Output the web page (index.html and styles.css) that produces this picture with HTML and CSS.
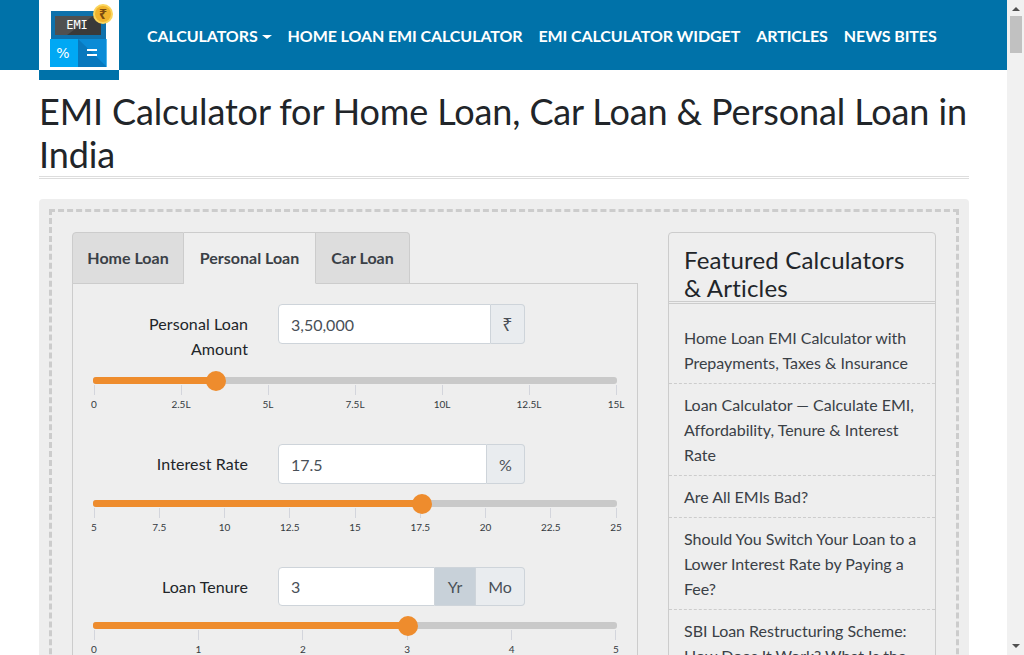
FILE: index.html
```html
<!DOCTYPE html>
<html lang="en">
  <head>
    <meta charset="UTF-8" />
    <meta name="viewport" content="width=device-width, initial-scale=1.0" />
    <title>EMI Calculator</title>
    <link rel="stylesheet" href="styles.css">
  </head>
  <body>
    <div class="page">
      <nav class="navbar">
        <a class="brand" href="#">
          <svg width="70" height="68" viewBox="0 0 70 68">
            <rect x="2" y="11" width="55" height="29" fill="#0f71ab" />
            <rect x="6" y="16" width="46" height="19" fill="#3a3a3a" />
            <polygon points="6,16 44,16 18,35 6,35" fill="#505050" />
            <text x="28" y="29" class="logo-emi" text-anchor="middle">EMI</text>
            <rect x="1" y="39" width="28" height="28" fill="#00a8f4" />
            <rect x="29" y="39" width="29" height="28" fill="#0a8bd6" />
            <polygon points="29,39 58,67 29,67" fill="#0878bd" />
            <rect x="57" y="39" width="1" height="28" fill="#4db6ee" />
            <text x="14" y="58" class="logo-sign" text-anchor="middle">%</text>
            <rect x="38" y="49" width="10" height="2" fill="#fff" />
            <rect x="38" y="54" width="10" height="2" fill="#fff" />
            <circle cx="54" cy="14" r="10" fill="#fbd55c" />
            <circle cx="54" cy="14" r="8" fill="#f0b32c" />
            <text x="54" y="19" class="logo-coin" text-anchor="middle">₹</text>
          </svg>
        </a>
        <ul class="nav-links">
          <li><a href="#">Calculators<span class="caret"></span></a></li>
          <li><a href="#">Home Loan EMI Calculator</a></li>
          <li><a href="#">EMI Calculator Widget</a></li>
          <li><a href="#">Articles</a></li>
          <li><a href="#">News Bites</a></li>
        </ul>
      </nav>

      <main class="main">
        <h1 class="page-title">EMI Calculator for Home Loan, Car Loan &amp; Personal Loan in India</h1>

        <div class="panel">
          <div class="dashed">
            <section class="calculator">
              <ul class="tabs">
                <li>Home Loan</li>
                <li class="active">Personal Loan</li>
                <li>Car Loan</li>
              </ul>
              <div class="tab-content">
                <div class="field field-amount">
                  <label>Personal Loan Amount</label>
                  <div class="input-group">
                    <input type="text" value="3,50,000" />
                    <span class="addon addon-rupee">₹</span>
                  </div>
                </div>
                <div class="slider">
                  <div class="rail"><div class="fill" style="width: 23.33%"><span class="thumb"></span></div></div>
                  <div class="ticks">
                    <span>0</span><span>2.5L</span><span>5L</span><span>7.5L</span><span>10L</span><span>12.5L</span><span>15L</span>
                  </div>
                </div>

                <div class="field field-rate">
                  <label>Interest Rate</label>
                  <div class="input-group">
                    <input type="text" value="17.5" />
                    <span class="addon addon-percent">%</span>
                  </div>
                </div>
                <div class="slider">
                  <div class="rail"><div class="fill" style="width: 62.5%"><span class="thumb"></span></div></div>
                  <div class="ticks">
                    <span>5</span><span>7.5</span><span>10</span><span>12.5</span><span>15</span><span>17.5</span><span>20</span><span>22.5</span><span>25</span>
                  </div>
                </div>

                <div class="field field-tenure">
                  <label>Loan Tenure</label>
                  <div class="input-group">
                    <input type="text" value="3" />
                    <span class="addon addon-on">Yr</span>
                    <span class="addon addon-off">Mo</span>
                  </div>
                </div>
                <div class="slider">
                  <div class="rail"><div class="fill" style="width: 60%"><span class="thumb"></span></div></div>
                  <div class="ticks">
                    <span>0</span><span>1</span><span>2</span><span>3</span><span>4</span><span>5</span>
                  </div>
                </div>
              </div>
            </section>

            <aside class="featured">
              <h2>Featured Calculators &amp; Articles</h2>
              <ul>
                <li>Home Loan EMI Calculator with Prepayments, Taxes &amp; Insurance</li>
                <li>Loan Calculator — Calculate EMI, Affordability, Tenure &amp; Interest Rate</li>
                <li>Are All EMIs Bad?</li>
                <li>Should You Switch Your Loan to a Lower Interest Rate by Paying a Fee?</li>
                <li>SBI Loan Restructuring Scheme: How Does It Work? What Is the Cost?</li>
              </ul>
            </aside>
          </div>
        </div>
      </main>
    </div>

    <div class="scrollbar">
      <span class="arrow-up"></span>
      <span class="scroll-thumb"></span>
      <span class="arrow-down"></span>
    </div>
  </body>
</html>
```

FILE: styles.css
```css
* {
  box-sizing: border-box;
}

html,
body {
  height: 100%;
  margin: 0;
  overflow: hidden;
}

body {
  display: flex;
  font-family: Lato, "Open Sans", Arial, sans-serif;
  color: #212529;
  background-color: #fff;
}

.page {
  flex: 1;
  min-width: 0;
}

/* navbar */

.navbar {
  display: flex;
  align-items: center;
  height: 70px;
  padding-left: 39px;
  background-color: #0072a9;
}

.brand {
  align-self: flex-start;
  display: block;
  width: 80px;
  height: 80px;
  padding: 0 0 0 10px;
  background: linear-gradient(#fff 70px, #0072a9 70px);
  flex-shrink: 0;
}

.brand svg {
  display: block;
}

.logo-emi {
  font-family: "DejaVu Sans Mono", monospace;
  font-size: 12px;
  fill: #fff;
}

.logo-sign {
  font-family: "DejaVu Sans", sans-serif;
  font-size: 14px;
  fill: #fff;
}

.logo-coin {
  font-family: "Noto Sans", "DejaVu Sans", sans-serif;
  font-size: 14px;
  font-weight: bold;
  fill: #7a4a10;
}

.nav-links {
  display: flex;
  gap: 16px;
  list-style: none;
  margin: 0 0 0 28px;
  padding: 0;
}

.nav-links a {
  color: #fff;
  font-size: 16px;
  font-weight: bold;
  letter-spacing: -0.09px;
  text-decoration: none;
  text-transform: uppercase;
}

.caret {
  display: inline-block;
  margin-left: 4px;
  vertical-align: 3px;
  border-top: 4px solid #fff;
  border-left: 5px solid transparent;
  border-right: 5px solid transparent;
}

/* content */

.main {
  padding: 0 38px 0 39px;
}

.page-title {
  margin: 20px 0 20px;
  font-size: 36px;
  font-weight: 400;
  letter-spacing: -0.13px;
  line-height: 43px;
  border-bottom: 3px double #ddd;
}

.panel {
  padding: 10px;
  background-color: #eee;
  border-radius: 4px;
}

.dashed {
  display: flex;
  align-items: flex-start;
  gap: 30px;
  padding: 20px;
  border: 3px dashed #ccc;
}

/* calculator */

.calculator {
  width: 566px;
  flex-shrink: 0;
}

.tabs {
  display: flex;
  list-style: none;
  margin: 0;
  padding: 0;
}

.tabs li {
  width: 132px;
  height: 52px;
  font-size: 16px;
  font-weight: bold;
  line-height: 50px;
  text-align: center;
  color: #3a4046;
  background-color: #ddd;
  border: 1px solid #ccc;
  border-left: 0;
  margin-bottom: -1px;
}

.tabs li:first-child {
  width: 112px;
  border-left: 1px solid #ccc;
  border-top-left-radius: 4px;
}

.tabs li:last-child {
  width: 94px;
  border-top-right-radius: 4px;
}

.tabs li.active {
  position: relative;
  background-color: #eee;
  border-bottom-color: #eee;
}

.tab-content {
  padding: 20px 20px 0;
  border: 1px solid #ccc;
}

.field {
  display: flex;
  align-items: flex-start;
}

.field label {
  width: 155px;
  padding: 7px 0 0 20px;
  font-size: 16px;
  letter-spacing: 0.1px;
  line-height: 25px;
  text-align: right;
}

.input-group {
  display: flex;
  width: 247px;
  height: 40px;
  margin-left: 30px;
}

.input-group input {
  flex: 1;
  min-width: 0;
  height: 100%;
  padding: 0 12px;
  font-family: inherit;
  font-size: 16px;
  color: #495057;
  background-color: #fff;
  border: 1px solid #ced4da;
  border-radius: 4px 0 0 4px;
  outline: 0;
}

.addon {
  display: flex;
  align-items: center;
  justify-content: center;
  font-size: 16px;
  color: #495057;
  background-color: #e9ecef;
  border: 1px solid #ced4da;
  border-left: 0;
}

.addon:last-child {
  border-radius: 0 4px 4px 0;
}

.addon-rupee {
  width: 34px;
  font-size: 18px;
  font-family: "Noto Sans", "DejaVu Sans", sans-serif;
}

.addon-percent {
  width: 38px;
}

.addon-on {
  width: 41px;
  background-color: #c8d1d9;
}

.addon-off {
  width: 49px;
}

.field-amount {
  height: 73px;
}

.field-rate {
  margin-top: 29px;
  height: 56px;
}

.field-tenure {
  margin-top: 29px;
  height: 55px;
}

.field-tenure .input-group {
  height: 39px;
}

/* sliders */

.slider {
  width: 524px;
}

.rail {
  height: 7px;
  background-color: #c9c9c9;
  border-radius: 3px;
}

.fill {
  position: relative;
  height: 100%;
  background-color: #ee8c2d;
  border-radius: 3px;
}

.thumb {
  position: absolute;
  top: -6.5px;
  right: -11px;
  width: 20px;
  height: 20px;
  background-color: #ee8c2d;
  border-radius: 50%;
}

.ticks {
  display: flex;
  justify-content: space-between;
  margin: 1px 1px 0;
  height: 30px;
}

.ticks span {
  display: flex;
  flex-direction: column;
  align-items: center;
  width: 0;
  font-size: 10px;
  line-height: 12px;
  white-space: nowrap;
  color: #343a40;
}

.ticks span::before {
  content: "";
  flex-shrink: 0;
  width: 1px;
  height: 10px;
  margin-bottom: 3px;
  background-color: #d3d5dc;
}

/* featured */

.featured {
  flex: 1;
  min-width: 0;
  border: 1px solid #ccc;
  border-radius: 4px;
}

.featured h2 {
  height: 71px;
  margin: 0;
  padding: 13px 15px 0;
  font-size: 24px;
  font-weight: 400;
  letter-spacing: 0.2px;
  line-height: 28px;
  border-bottom: 3px double #ccc;
}

.featured ul {
  list-style: none;
  margin: 0;
  padding: 13px 0 0;
}

.featured li {
  padding: 8px 15px;
  font-size: 16px;
  letter-spacing: -0.02px;
  line-height: 25px;
  color: #3a4046;
  border-bottom: 1px dashed #ccc;
}

/* fake browser scrollbar */

.scrollbar {
  position: relative;
  width: 17px;
  flex-shrink: 0;
  background-color: #f1f1f1;
}

.scroll-thumb {
  position: absolute;
  top: 16px;
  left: 3px;
  width: 12px;
  height: 37px;
  background-color: #c1c1c1;
}

.arrow-up,
.arrow-down {
  position: absolute;
  left: 5px;
  border-left: 4px solid transparent;
  border-right: 4px solid transparent;
}

.arrow-up {
  top: 7px;
  border-bottom: 4px solid #505050;
}

.arrow-down {
  bottom: 7px;
  border-top: 4px solid #505050;
}
```
